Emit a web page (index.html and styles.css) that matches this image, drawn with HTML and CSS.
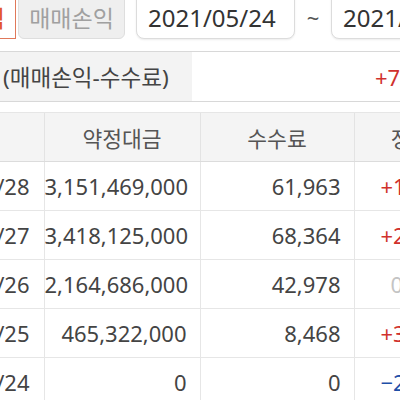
FILE: index.html
```html
<!DOCTYPE html>
<html lang="ko">
<head>
<meta charset="utf-8">
<link rel="stylesheet" href="styles.css">
</head>
<body>
<div class="page">
  <div class="toolbar">
    <div class="tab tab-active">실현손익</div>
    <div class="tab">매매손익</div>
    <div class="date-box">2021/05/24</div>
    <div class="tilde">~</div>
    <div class="date-box">2021/05/28</div>
  </div>
  <div class="summary">
    <div class="summary-label">(매매손익-수수료)</div>
    <div class="summary-value plus">+7,000,000</div>
  </div>
  <table class="grid">
    <colgroup>
      <col class="w-date">
      <col class="w-amt">
      <col class="w-fee">
      <col class="w-pl">
    </colgroup>
    <thead>
      <tr>
        <th>일자</th>
        <th>약정대금</th>
        <th>수수료</th>
        <th>정산금액</th>
      </tr>
    </thead>
    <tbody>
      <tr><td>05/28</td><td>3,151,469,000</td><td>61,963</td><td class="c-pl plus">+1,234,000</td></tr>
      <tr><td>05/27</td><td>3,418,125,000</td><td>68,364</td><td class="c-pl plus">+2,345,000</td></tr>
      <tr><td>05/26</td><td>2,164,686,000</td><td>42,978</td><td class="c-pl zero">0</td></tr>
      <tr><td>05/25</td><td>465,322,000</td><td>8,468</td><td class="c-pl plus">+3,456,000</td></tr>
      <tr><td>05/24</td><td>0</td><td>0</td><td class="c-pl minus">−2,100,000</td></tr>
    </tbody>
  </table>
</div>
</body>
</html>
```
FILE: styles.css
```css
html, body {
  margin: 0;
  padding: 0;
  background: #ffffff;
  overflow: hidden;
}
body {
  font-family: "Noto Sans", "Noto Sans CJK KR", sans-serif;
  color: #333;
}
.page {
  width: 640px;
}
.toolbar {
  display: flex;
  align-items: stretch;
  height: 44px;
  margin-top: -5px;
  margin-left: -91px;
}
.tab {
  width: 107px;
  box-sizing: border-box;
  display: flex;
  align-items: center;
  justify-content: center;
  font-size: 23px;
  color: #a0a0a0;
  background: #efefef;
  border: 1px solid #dedede;
  border-radius: 0 0 6px 6px;
  margin-right: 11px;
}
.tab-active {
  color: #e0502a;
  background: #fff;
  border-color: #e0785a;
  border-radius: 0;
  margin-right: 2px;
}
.date-box {
  width: 159px;
  box-sizing: border-box;
  display: flex;
  align-items: center;
  padding-left: 11px;
  font-size: 24px;
  color: #333;
  background: #fff;
  border: 1px solid #dcdcdc;
  border-radius: 0 0 8px 8px;
  box-shadow: 0 1px 2px rgba(0,0,0,0.08);
}
.tilde {
  width: 36px;
  display: flex;
  align-items: center;
  justify-content: center;
  font-size: 22px;
  color: #555;
}
.summary {
  display: flex;
  height: 49px;
  margin-top: 12px;
  border-top: 1px solid #d8d8d8;
  border-bottom: 1px solid #d8d8d8;
}
.summary-label {
  width: 192px;
  box-sizing: border-box;
  padding-left: 3px;
  display: flex;
  align-items: center;
  background: #f3f3f3;
  font-size: 22.5px;
  color: #444;
}
.summary-value {
  flex: 1;
  display: flex;
  align-items: center;
  padding-left: 183px;
  font-size: 22px;
}
.grid {
  width: 596px;
  margin-top: 10px;
  margin-left: -90px;
  border-collapse: collapse;
  table-layout: fixed;
  font-size: 22px;
}
.w-date { width: 134px; }
.w-amt { width: 156px; }
.w-fee { width: 154px; }
.w-pl { width: 152px; }
.grid th {
  height: 48px;
  background: #f4f4f4;
  font-weight: normal;
  color: #555;
  font-size: 21.5px;
  border-top: 1px solid #e6e6e6;
  border-bottom: 1px solid #dcdcdc;
  border-left: 1px solid #e3e3e3;
  padding: 0;
}
.grid td {
  height: 48px;
  padding: 0 13px 0 0;
  text-align: right;
  color: #444;
  border-bottom: 1px solid #e6e6e6;
  border-left: 1px solid #e6e6e6;
  white-space: nowrap;
  overflow: hidden;
}
.grid td:first-child { padding-right: 14px; }
.grid td.c-pl { text-align: left; padding-left: 26px; }
.grid td.c-pl.zero { padding-left: 36px; }
.grid th:first-child, .grid td:first-child { border-left: none; }
.plus, .grid td.plus { color: #d0312d; }
.minus, .grid td.minus { color: #1e4fa8; }
.grid td.zero { color: #c4c4c4; }
```
